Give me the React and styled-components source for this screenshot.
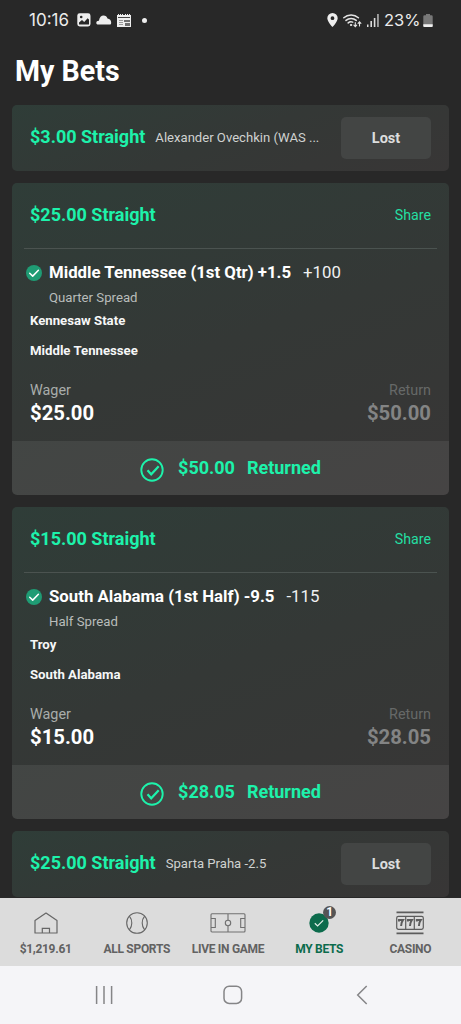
import React from "react";
import styled, { createGlobalStyle } from "styled-components";

const GlobalStyle = createGlobalStyle`
  * {
    box-sizing: border-box;
  }
  body {
    margin: 0;
    background: #282828;
    font-family: Roboto, "Liberation Sans", sans-serif;
    color: #fff;
  }
`;

const Screen = styled.div`
  display: flex;
  flex-direction: column;
  width: 461px;
  height: 1024px;
  overflow: hidden;
  background: #282828;
`;
const StatusBar = styled.div`
  display: flex;
  align-items: center;
  justify-content: space-between;
  height: 40px;
  flex-shrink: 0;
  padding: 0 28px 0 29px;
  color: #ececec;
  font-family: Inter, Roboto, sans-serif;
`;
const StatusGroup = styled.div`
  display: flex;
  align-items: center;
  gap: 5px;

  svg {
    display: block;
  }
`;
const StatusText = styled.span`
  width: ${(props) => props.$width}px;
  font-size: ${(props) => props.$size}px;
  white-space: nowrap;
`;
const Dot = styled.i`
  width: 5px;
  height: 5px;
  margin-left: 6px;
  border-radius: 50%;
  background: #eee;
`;
const PageTitle = styled.h1`
  margin: 0;
  padding: 0 15px;
  height: 65px;
  flex-shrink: 0;
  font-size: 28.6px;
  line-height: 63px;
  font-weight: 700;
`;
const BetList = styled.main`
  display: flex;
  flex-direction: column;
  flex: 1;
  gap: 12px;
  min-height: 0;
  padding: 0 12px;
  overflow: hidden;
`;
const Card = styled.article`
  flex-shrink: 0;
  border-radius: 5px;
  overflow: hidden;
  background: linear-gradient(160deg, #2f3d38 0%, #343836 50%, #383636 100%);
`;
const CompactCard = styled(Card)`
  display: flex;
  align-items: center;
  height: 66px;
  padding: 0 18px;
`;
const BetTitle = styled.h2`
  margin: 0;
  padding-bottom: ${(props) => (props.$compact ? 2 : 0)}px;
  font-size: 18px;
  line-height: 24px;
  font-weight: 700;
  color: #1df2ab;
  white-space: nowrap;
`;
const Summary = styled.span`
  flex: 1;
  padding-left: 10px;
  font-size: 13.1px;
  line-height: 20px;
  color: #d0d2d1;
  white-space: nowrap;
`;
const LostButton = styled.button`
  width: 90px;
  height: 42px;
  padding: 0;
  border: 0;
  border-radius: 5px;
  background: #434544;
  color: #dcdddd;
  font-family: inherit;
  font-size: 14.5px;
  font-weight: 700;
`;
const CardHeader = styled.header`
  display: flex;
  align-items: center;
  justify-content: space-between;
  height: 66px;
  margin: 0 12px;
  padding: 0 6px 1px;
  border-bottom: 1px solid #4b5350;
`;
const ShareLink = styled.a`
  font-size: 14.2px;
  line-height: 20px;
  color: #24dfa2;
`;
const Selection = styled.div`
  display: flex;
  align-items: center;
  padding: 11px 15px 0 14px;
  line-height: 24px;
  font-size: 16.8px;
  white-space: nowrap;

  svg {
    margin: 2px 7px 0 0;
  }
`;
const Pick = styled.span`
  font-weight: 700;
`;
const Odds = styled.span`
  margin-left: 12px;
  color: #f0f1f1;
`;
const Market = styled.div`
  margin-top: 5px;
  padding-left: 37px;
  font-size: 13.2px;
  line-height: 18px;
  color: #b9bdbb;
`;
const Team = styled.div`
  margin-top: ${(props) => props.$gap}px;
  padding-left: 18px;
  font-size: 13.2px;
  line-height: 18px;
  font-weight: 700;
  color: #f6f7f7;
`;
const Stakes = styled.div`
  display: flex;
  justify-content: space-between;
  padding: 22px 18px 16px;
`;
const Stake = styled.div`
  text-align: ${(props) => (props.$muted ? "right" : "left")};
  color: ${(props) => (props.$muted ? "#838484" : "#fff")};

  span {
    display: block;
    font-size: 14.4px;
    line-height: 18px;
    color: ${(props) => (props.$muted ? "#666968" : "#a9adab")};
  }
  strong {
    display: block;
    margin-top: 1px;
    font-size: 20.3px;
    line-height: 24px;
  }
`;
const ResultBar = styled.footer`
  display: flex;
  align-items: center;
  justify-content: center;
  height: 54px;
  background: rgba(255, 255, 255, 0.07);

  svg {
    margin: 4px 14px 0 0;
  }
`;
const ResultText = styled.div`
  display: flex;
  gap: 12px;
  padding-bottom: 1px;
  font-size: 18px;
  font-weight: 700;
  color: #1df2ab;
`;
const TabBar = styled.nav`
  display: grid;
  grid-template-columns: repeat(5, 1fr);
  height: 68px;
  flex-shrink: 0;
  padding-right: 5px;
  background: #dcdcdc;
`;
const Tab = styled.a`
  display: flex;
  flex-direction: column;
  align-items: center;
  padding-top: 11px;
  font-size: 12px;
  line-height: 16px;
  font-weight: 700;
  letter-spacing: -0.3px;
  white-space: nowrap;
  color: ${(props) => (props.$active ? "#0c6b4c" : "#626262")};

  svg {
    display: block;
  }
`;
const TabIcon = styled.div`
  position: relative;
  display: flex;
  align-items: center;
  justify-content: center;
  height: 27px;
  margin-bottom: 5px;
`;
const Badge = styled.span`
  position: absolute;
  top: -3px;
  left: 14px;
  width: 13px;
  height: 13px;
  border-radius: 50%;
  background: #555;
  color: #fff;
  font-size: 12px;
  line-height: 13px;
  letter-spacing: 0;
  text-align: center;
`;
const SystemBar = styled.div`
  display: flex;
  align-items: center;
  justify-content: space-between;
  height: 58px;
  flex-shrink: 0;
  padding: 0 93px 1px 94px;
  background: #f5f5f8;
`;

const PictureIcon = () => (
  <svg width="14" height="14" viewBox="0 0 14 14">
    <rect x="0.3" y="0.3" width="13.2" height="13.2" rx="2.4" fill="#eee" />
    <path d="M2 11.500V9.500L5 7l2.200 2L10.600 5.200 12 6.600v4.900z" fill="#282828" />
    <circle cx="4.200" cy="4" r="1.300" fill="#282828" />
  </svg>
);

const CloudIcon = () => (
  <svg width="16" height="10" viewBox="0 0 16 10">
    <path
      d="M2.400 9.600C.7 9.600.3 8.800.3 7.800c0-1.400 1.200-2.100 2.600-2C3.500 2.500 5.200.6 7.600.6c2 0 3.300 1.200 3.900 3 2.200.2 3.700 2 3.700 4.100 0 1.300-.5 1.900-1.600 1.900z"
      fill="#eee"
    />
  </svg>
);

const NewsIcon = () => (
  <svg width="14" height="13" viewBox="0 0 14 13">
    <path
      d="M0 1h1V0h1v1h1V0h1v1h1V0h1v1h2V0h1v1h1V0h1v1h1V0h1v1h1v12H0z"
      fill="#eee"
    />
    <path d="M1 3h12v1H1z" fill="#444" />
    <path d="M2 6h4v1H2zM2 8h4v1H2zM2 10h4v1H2z" fill="#999" />
    <path d="M7 6h6v2H7zM8 9h5v3H8z" fill="#6f6f6f" />
  </svg>
);

const PinIcon = () => (
  <svg width="11" height="14" viewBox="0 0 11 14">
    <path
      d="M5.500 0A5.200 5.200 0 0 0 .3 5.200C.3 8.500 5.500 14 5.500 14s5.200-5.500 5.200-8.800A5.200 5.200 0 0 0 5.500 0zm0 3.300a1.900 1.900 0 1 1 0 3.800 1.900 1.900 0 0 1 0-3.800z"
      fill="#eee"
      fillRule="evenodd"
    />
  </svg>
);

const WifiIcon = () => (
  <svg width="19" height="15" viewBox="0 0 19 15" fill="none" stroke="#e4e4e4" strokeLinecap="round">
    <path
      d="M.8 4.800a10.700 10.700 0 0 1 14.600 0M3 7.400a7.600 7.600 0 0 1 10.200 0M5.200 9.900a4.300 4.300 0 0 1 4.500-.8"
      strokeWidth="1.500"
    />
    <circle cx="8" cy="12" r="0.700" fill="#e4e4e4" />
    <path
      d="M12.300 9.500v4M10.900 12.200l1.400 1.500 1.400-1.500M16.500 13V9M15.100 10.300l1.400-1.500 1.400 1.500"
      strokeWidth="1.100"
    />
  </svg>
);

const SignalIcon = () => (
  <svg width="12" height="13" viewBox="0 0 12 13">
    <rect x="0" y="10.500" width="1.500" height="2.500" fill="#ddd" />
    <rect x="3.400" y="7" width="1.600" height="6" fill="#ddd" />
    <rect x="6.800" y="4" width="1.600" height="9" fill="#ddd" />
    <rect x="10.200" y="0" width="1.500" height="13" fill="#bbb" />
  </svg>
);

const BatteryIcon = () => (
  <svg width="10" height="13" viewBox="0 0 10 13">
    <path d="M3 0h4v1.300h1.500Q9.700 1.300 9.700 2.500V13H.3V2.500Q.3 1.300 1.500 1.300H3z" fill="#777" />
    <path d="M.3 10.200h9.400v1.600q0 1.200-1.200 1.200h-7Q.3 13 .3 11.800z" fill="#f0f0f0" />
  </svg>
);

const WonIcon = () => (
  <svg width="16" height="16" viewBox="0 0 16 16">
    <circle cx="8" cy="8" r="8" fill="#1f9c74" />
    <path
      d="M3.700 8.200l3 2.900 5.700-5.800"
      fill="none"
      stroke="#fff"
      strokeWidth="1.500"
      strokeLinecap="round"
      strokeLinejoin="round"
    />
  </svg>
);

const ReturnedIcon = () => (
  <svg width="24" height="24" viewBox="0 0 24 24" fill="none" stroke="#1df2ab">
    <circle cx="12" cy="12" r="10.700" strokeWidth="1.900" />
    <path d="M7.500 12.200l3.700 4.100 7.500-8" strokeWidth="2.200" />
  </svg>
);

const HomeIcon = () => (
  <svg width="24" height="22" viewBox="0 0 24 22" fill="none" stroke="#666" strokeWidth="1.200">
    <path d="M1 21V8.600L12 1l11 7.600V21z" strokeLinejoin="round" />
    <path d="M8.300 21v-4.700h7.200V21" />
  </svg>
);

const BallIcon = () => (
  <svg width="22" height="22" viewBox="0 0 22 22" fill="none" stroke="#666" strokeWidth="1.100">
    <circle cx="11" cy="11" r="10.300" />
    <path d="M3.400 4.200c3.200 3.900 3.200 9.700 0 13.600M18.600 4.200c-3.200 3.900-3.200 9.700 0 13.600" />
  </svg>
);

const PitchIcon = () => (
  <svg width="36" height="20" viewBox="0 0 36 20" fill="none" stroke="#707070" strokeWidth="1.100">
    <rect x="1" y="0.800" width="34" height="18.200" rx="1" />
    <path d="M18 1v6.300M18 12.700V19M1 5.500h4.300v9H1M35 5.500h-4.300v9H35" />
    <circle cx="18" cy="10" r="2.700" />
  </svg>
);

const BetsIcon = () => (
  <svg width="20" height="20" viewBox="0 0 20 20">
    <circle cx="10" cy="10" r="9.700" fill="#0c6b4c" />
    <path d="M5.800 10.300l2.800 2.700 5.600-5.600" fill="none" stroke="#e3eee9" strokeWidth="1.200" />
  </svg>
);

const SlotsIcon = () => (
  <svg width="28" height="24" viewBox="0 0 28 24" fill="none" stroke="#5c5c5c">
    <path d="M.5 1.400h27M.5 22.400h27" strokeWidth="1.900" />
    <rect x="0.700" y="5.300" width="26.600" height="13" rx="1.700" strokeWidth="1.200" />
    <path d="M9.700 5.300v13M18.300 5.300v13" strokeWidth="1.200" />
    <path
      d="M3 10.500V9.100h3.900c-1.300 1.700-1.800 3.400-1.800 6M11.900 10.500V9.100h3.900c-1.300 1.700-1.800 3.400-1.800 6M20.800 10.500V9.100h3.900c-1.300 1.700-1.800 3.400-1.800 6"
      strokeWidth="2"
    />
  </svg>
);

const RecentsIcon = () => (
  <svg width="20" height="20" viewBox="0 0 20 20" stroke="#858587" strokeWidth="1.500">
    <path d="M2.600 1v18M10 1v18M17.600 1v18" />
  </svg>
);

const HomeKeyIcon = () => (
  <svg width="24" height="20" viewBox="0 0 24 20" fill="none" stroke="#858587" strokeWidth="1.500">
    <rect x="1" y="1.200" width="17.600" height="17.200" rx="5.200" />
  </svg>
);

const BackIcon = () => (
  <svg width="12" height="20" viewBox="0 0 12 20" fill="none" stroke="#858587" strokeWidth="1.500">
    <path d="M10.700 1L1.700 10l9 9" />
  </svg>
);

const bets = [
  { stake: "$3.00", lost: true, summary: "Alexander Ovechkin (WAS ..." },
  {
    stake: "$25.00",
    pick: "Middle Tennessee (1st Qtr) +1.5",
    odds: "+100",
    market: "Quarter Spread",
    teams: ["Kennesaw State", "Middle Tennessee"],
    payout: "$50.00",
  },
  {
    stake: "$15.00",
    pick: "South Alabama (1st Half) -9.5",
    odds: "-115",
    market: "Half Spread",
    teams: ["Troy", "South Alabama"],
    payout: "$28.05",
  },
  { stake: "$25.00", lost: true, summary: "Sparta Praha -2.5" },
];

const tabs = [
  { label: "$1,219.61", icon: <HomeIcon /> },
  { label: "ALL SPORTS", icon: <BallIcon /> },
  { label: "LIVE IN GAME", icon: <PitchIcon /> },
  { label: "MY BETS", icon: <BetsIcon />, active: true, badge: 1 },
  { label: "CASINO", icon: <SlotsIcon /> },
];

const LostBet = ({ bet }) => (
  <CompactCard>
    <BetTitle $compact>{bet.stake} Straight</BetTitle>
    <Summary>{bet.summary}</Summary>
    <LostButton>Lost</LostButton>
  </CompactCard>
);

const WonBet = ({ bet }) => (
  <Card>
    <CardHeader>
      <BetTitle>{bet.stake} Straight</BetTitle>
      <ShareLink>Share</ShareLink>
    </CardHeader>
    <Selection>
      <WonIcon />
      <Pick>{bet.pick}</Pick>
      <Odds>{bet.odds}</Odds>
    </Selection>
    <Market>{bet.market}</Market>
    <Team $gap={5}>{bet.teams[0]}</Team>
    <Team $gap={12}>{bet.teams[1]}</Team>
    <Stakes>
      <Stake>
        <span>Wager</span>
        <strong>{bet.stake}</strong>
      </Stake>
      <Stake $muted>
        <span>Return</span>
        <strong>{bet.payout}</strong>
      </Stake>
    </Stakes>
    <ResultBar>
      <ReturnedIcon />
      <ResultText>
        <span>{bet.payout}</span>
        <span>Returned</span>
      </ResultText>
    </ResultBar>
  </Card>
);

const App = () => {
  return (
    <>
      <GlobalStyle />
      <Screen>
        <StatusBar>
          <StatusGroup>
            <StatusText $width={43} $size={17}>
              10:16
            </StatusText>
            <PictureIcon />
            <CloudIcon />
            <NewsIcon />
            <Dot />
          </StatusGroup>
          <StatusGroup>
            <PinIcon />
            <WifiIcon />
            <SignalIcon />
            <StatusText $width={34} $size={16.5}>
              23%
            </StatusText>
            <BatteryIcon />
          </StatusGroup>
        </StatusBar>
        <PageTitle>My Bets</PageTitle>
        <BetList>
          {bets.map((bet, i) =>
            bet.lost ? <LostBet key={i} bet={bet} /> : <WonBet key={i} bet={bet} />
          )}
        </BetList>
        <TabBar>
          {tabs.map((tab) => (
            <Tab key={tab.label} $active={tab.active}>
              <TabIcon>
                {tab.icon}
                {tab.badge && <Badge>{tab.badge}</Badge>}
              </TabIcon>
              {tab.label}
            </Tab>
          ))}
        </TabBar>
        <SystemBar>
          <RecentsIcon />
          <HomeKeyIcon />
          <BackIcon />
        </SystemBar>
      </Screen>
    </>
  );
};

export default App;
